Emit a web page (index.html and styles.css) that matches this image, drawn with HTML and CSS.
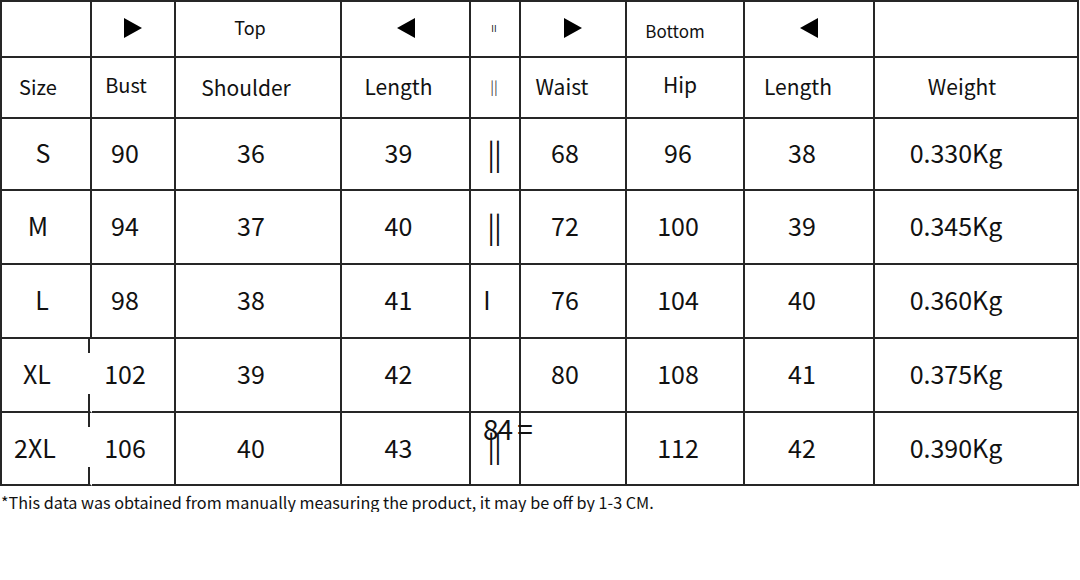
FILE: index.html
```html
<!DOCTYPE html>
<html lang="en">
<head>
<meta charset="utf-8">
<title>Size chart</title>
<link rel="stylesheet" href="styles.css">
</head>
<body>
<div class="chart">
  <div class="grid">
    <!-- header row 1 -->
    <div class="cell c1 h1"></div>
    <div class="cell c2 h1 tri"><svg width="18" height="20" viewBox="0 0 18 20"><polygon points="0,0 18,10 0,20" fill="#000"/></svg></div>
    <div class="cell c3 h1 top">Top</div>
    <div class="cell c4 h1 tri"><svg width="18" height="20" viewBox="0 0 18 20"><polygon points="18,0 0,10 18,20" fill="#000"/></svg></div>
    <div class="cell c5 h1 tiny">II</div>
    <div class="cell c6 h1 tri"><svg width="18" height="20" viewBox="0 0 18 20"><polygon points="0,0 18,10 0,20" fill="#000"/></svg></div>
    <div class="cell c7 h1 bottom">Bottom</div>
    <div class="cell c8 h1 tri"><svg width="18" height="20" viewBox="0 0 18 20"><polygon points="18,0 0,10 18,20" fill="#000"/></svg></div>
    <div class="cell c9 h1"></div>

    <!-- header row 2 -->
    <div class="cell c1 h2 sm">Size</div>
    <div class="cell c2 h2 sm">Bust</div>
    <div class="cell c3 h2 shoulder">Shoulder</div>
    <div class="cell c4 h2">Length</div>
    <div class="cell c5 h2 bars-sm">||</div>
    <div class="cell c6 h2 waist">Waist</div>
    <div class="cell c7 h2 hip">Hip</div>
    <div class="cell c8 h2 len2">Length</div>
    <div class="cell c9 h2 weight">Weight</div>

    <!-- S -->
    <div class="cell c1 d s-s">S</div>
    <div class="cell c2 d">90</div>
    <div class="cell c3 d">36</div>
    <div class="cell c4 d">39</div>
    <div class="cell c5 d bars">||</div>
    <div class="cell c6 d">68</div>
    <div class="cell c7 d">96</div>
    <div class="cell c8 d">38</div>
    <div class="cell c9 d">0.330Kg</div>

    <!-- M -->
    <div class="cell c1 d s-m">M</div>
    <div class="cell c2 d">94</div>
    <div class="cell c3 d">37</div>
    <div class="cell c4 d">40</div>
    <div class="cell c5 d bars">||</div>
    <div class="cell c6 d">72</div>
    <div class="cell c7 d">100</div>
    <div class="cell c8 d">39</div>
    <div class="cell c9 d">0.345Kg</div>

    <!-- L -->
    <div class="cell c1 d s-l">L</div>
    <div class="cell c2 d">98</div>
    <div class="cell c3 d">38</div>
    <div class="cell c4 d">41</div>
    <div class="cell c5 d single">I</div>
    <div class="cell c6 d">76</div>
    <div class="cell c7 d">104</div>
    <div class="cell c8 d">40</div>
    <div class="cell c9 d">0.360Kg</div>

    <!-- XL -->
    <div class="cell c1 d broken s-xl">XL</div>
    <div class="cell c2 d">102</div>
    <div class="cell c3 d">39</div>
    <div class="cell c4 d">42</div>
    <div class="cell c5 d"></div>
    <div class="cell c6 d">80</div>
    <div class="cell c7 d">108</div>
    <div class="cell c8 d">41</div>
    <div class="cell c9 d">0.375Kg</div>

    <!-- 2XL -->
    <div class="cell c1 d broken xxl">2XL</div>
    <div class="cell c2 d">106</div>
    <div class="cell c3 d">40</div>
    <div class="cell c4 d">43</div>
    <div class="cell c5 d bars low"><span class="stray">84 <span class="eq">=</span></span>||</div>
    <div class="cell c6 d"></div>
    <div class="cell c7 d">112</div>
    <div class="cell c8 d">42</div>
    <div class="cell c9 d">0.390Kg</div>
  </div>
  <p class="note">*This data was obtained from manually measuring the product, it may be off by 1-3 CM.</p>
</div>
</body>
</html>
```

FILE: styles.css
```css
* {
  box-sizing: border-box;
}

html, body {
  margin: 0;
  padding: 0;
  background: #ffffff;
}

body {
  font-family: "Noto Sans CJK SC", "Noto Sans", sans-serif;
  color: #111111;
}

.chart {
  width: 1080px;
}

.grid {
  display: grid;
  grid-template-columns: 90px 84px 166px 129px 50px 106px 118px 130px 204px;
  grid-template-rows: 56px 61px 72px 74px 74px 74px 73px;
  width: 1079px;
  border-left: 2px solid #262626;
  border-top: 2px solid #262626;
}

.cell {
  display: flex;
  align-items: center;
  justify-content: center;
  border-right: 2px solid #262626;
  border-bottom: 2px solid #262626;
  white-space: nowrap;
  line-height: 1;
}

/* column offsets: text sits slightly left of centre */
.c1 { padding-right: 12px; }
.c2 { padding-right: 16px; }
.c3 { padding-right: 14px; }
.c4 { padding-right: 14px; }
.c5 { padding-right: 0; }
.c6 { padding-right: 16px; }
.c7 { padding-right: 14px; }
.c8 { padding-right: 14px; }
.c9 { padding-right: 40px; }

/* header row 1 */
.h1 {
  font-size: 18px;
  padding-bottom: 2px;
}
.tri {
  padding-right: 0;
}
.tri svg {
  display: block;
}
.top { padding-right: 16px; font-size: 18px; padding-bottom: 4px; }
.bottom { padding-right: 20px; font-size: 17px; padding-top: 4px; }
.tiny {
  font-size: 9px;
  padding-right: 2px;
}

/* header row 2 */
.h2 {
  font-size: 21px;
  padding-bottom: 3px;
}
.sm { font-size: 20px; }
.c1.sm { padding-right: 16px; padding-bottom: 1px; }
.c2.sm { padding-right: 14px; padding-bottom: 5px; }
.shoulder { padding-right: 24px; padding-bottom: 0; }
.waist { padding-right: 22px; }
.hip { padding-right: 10px; padding-bottom: 6px; }
.len2 { padding-right: 22px; }
.weight { padding-right: 28px; }
.bars-sm {
  font-size: 14px;
  color: #444444;
  padding-right: 2px;
}

/* data rows */
.d {
  font-size: 25px;
  padding-bottom: 3px;
}
.s-s { padding-right: 6px; }
.s-m { padding-right: 16px; }
.s-l { padding-right: 8px; }
.s-xl { padding-right: 18px; }
.bars {
  font-size: 29px;
  letter-spacing: -1px;
  padding-right: 2px;
}
.single {
  padding-right: 16px;
}

.low {
  position: relative;
  align-items: flex-start;
  padding-top: 17px;
}

.stray {
  position: absolute;
  left: 12px;
  top: 1px;
  font-size: 28px;
  white-space: nowrap;
}

.xxl { padding-right: 22px; }

/* broken line to the right of the size column in the XL / 2XL rows */
.broken {
  border-right-color: transparent;
  background:
    linear-gradient(#262626, #262626) right top / 2px 14px no-repeat,
    linear-gradient(#262626, #262626) right bottom / 2px 17px no-repeat;
}

.note {
  margin: 6px 0 0 1px;
  font-size: 16.2px;
  line-height: 20px;
  color: #111111;
}
```
